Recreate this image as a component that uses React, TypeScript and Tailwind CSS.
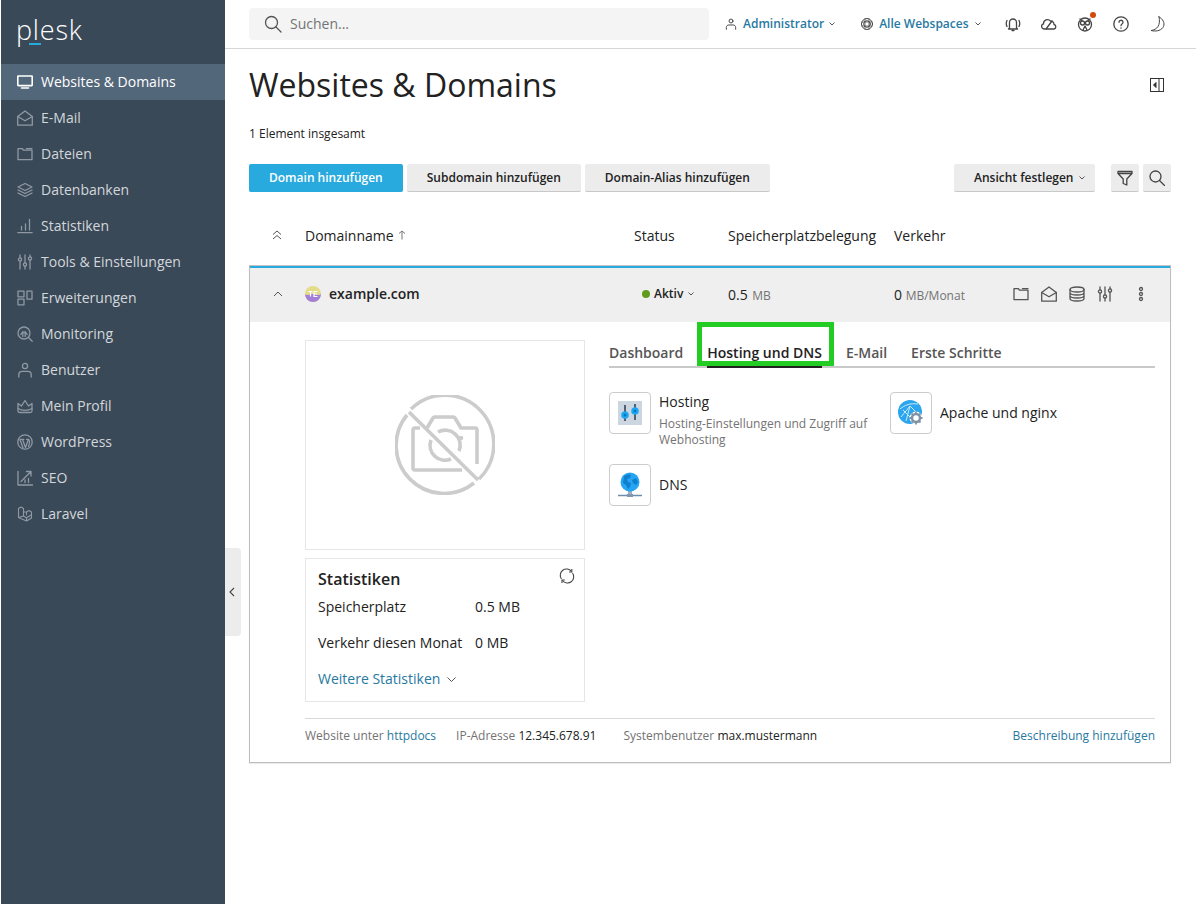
import React from "react";

type IP = { children: React.ReactNode; size?: number; className?: string; sw?: number; vb?: string };
const I = ({ children, size = 16, className = "", sw = 1.3, vb = "0 0 16 16" }: IP) => (
  <svg width={size} height={size} viewBox={vb} fill="none" stroke="currentColor" strokeWidth={sw} strokeLinecap="round" strokeLinejoin="round" className={`shrink-0 ${className}`}>
    {children}
  </svg>
);

const Monitor = () => (
  <I className="text-white" sw={1.6}>
    <rect x="0.8" y="2" width="14.4" height="9.6" rx="0.5" />
    <path d="M4.5 14h7" strokeWidth="1.6" />
  </I>
);
const MailOpen = ({ size = 16 }: { size?: number }) => (
  <I size={size}>
    <path d="M.7 6.5v8.7h14.6V6.5L8 .9z" />
    <path d="M.7 6.5 8 10.8l7.3-4.3" />
  </I>
);
const Folder = ({ size = 16 }: { size?: number }) => (
  <I size={size}>
    <path d="M1 13.7V2.6h4.4l1 1.6h8.6v9.5z" />
    <path d="M9.5 2.6H15" />
  </I>
);
const Layers = () => (
  <I>
    <path d="M8 1.5 15 5 8 8.5 1 5z" />
    <path d="M1 8l7 3.5L15 8" />
    <path d="M1 11l7 3.5 7-3.5" />
  </I>
);
const Bars = () => (
  <I>
    <path d="M.8 14.6h14.4M4.5 12V8.5M8.5 12V6M12.5 12V1.5" />
  </I>
);
const Sliders = ({ size = 16 }: { size?: number }) => (
  <I size={size}>
    <path d="M3 1v3M3 7v8M8 1v8M8 12v3M13 1v2M13 6v9" />
    <circle cx="3" cy="5.5" r="1.6" />
    <circle cx="8" cy="10.5" r="1.6" />
    <circle cx="13" cy="4.5" r="1.6" />
  </I>
);
const Ext = () => (
  <I>
    <rect x="1" y="1.2" width="6" height="5.6" />
    <rect x="1" y="9.2" width="6" height="5.6" />
    <rect x="10" y="1.2" width="5" height="8" />
  </I>
);
const Monitoring = () => (
  <I>
    <circle cx="7" cy="7" r="6" />
    <path d="M11.5 11.5 15.2 15.2" />
    <path d="M3.8 8.5A3.500 3.500 0 0 1 10.200 8.500" />
    <path d="M5.8 5.500v5M8.200 5.500v5" />
  </I>
);
const User = ({ size = 16 }: { size?: number }) => (
  <I size={size}>
    <circle cx="8" cy="4" r="2.6" />
    <path d="M1.8 15v-2.5c0-2 1.6-3.2 3.4-3.2h5.6c1.8 0 3.4 1.200 3.400 3.200V15" />
  </I>
);
const Crown = () => (
  <I>
    <path d="M1 5.500 4.500 8 8 2.500 11.500 8 15 5.500v7.500c0 1-1 1.500-2 1.500H3c-1 0-2-.5-2-1.500z" />
    <path d="M1 10.500c2 1.300 4.500 1.800 7 1.800s5-.5 7-1.800" />
  </I>
);
const WP = () => (
  <I>
    <circle cx="8" cy="8" r="7.200" />
    <path d="M3 5.500 6 14M5.500 5.500l3 8 2.500-7M9.500 5.300h2.500M3 5.300h3.800M11.500 5.500c1.500 1.500 1.500 3.500 0 7" />
  </I>
);
const Seo = () => (
  <I>
    <path d="M1 1.500V15h14.500" />
    <path d="M4 11.500 13.500 2M9.500 1.500h4.500V6M8 12.500V10M11.500 12.500V8.500" />
  </I>
);
const Laravel = () => (
  <I sw={1.1}>
    <path d="M1.500 2.500 4 1l2.500 1.500V10l3 1.700 5-3V6l-2.500-1.500L9.500 6v2.700M1.500 2.500V11.500l8 3.500 5-3V8.700M6.500 6l3 0M9.500 11.700V15M1.500 11.500 6.500 10" />
  </I>
);

const nav: [React.ReactNode, string][] = [
  [<MailOpen />, "E-Mail"],
  [<Folder />, "Dateien"],
  [<Layers />, "Datenbanken"],
  [<Bars />, "Statistiken"],
  [<Sliders />, "Tools & Einstellungen"],
  [<Ext />, "Erweiterungen"],
  [<Monitoring />, "Monitoring"],
  [<User />, "Benutzer"],
  [<Crown />, "Mein Profil"],
  [<WP />, "WordPress"],
  [<Seo />, "SEO"],
  [<Laravel />, "Laravel"],
];

const Chev = ({ className = "" }: { className?: string }) => (
  <svg width="6" height="4" viewBox="0 0 6 4" fill="none" stroke="currentColor" strokeWidth="1" className={`shrink-0 ${className}`}>
    <path d="M.5.5 3 3 5.500.5" />
  </svg>
);

const Btn = ({ children, primary }: { children: React.ReactNode; primary?: boolean }) => (
  <div className={`h-[28px] px-[20px] flex items-center justify-center rounded-[2px] text-[12px] font-semibold border-b ${primary ? "bg-[#28aade] text-white border-[#28aade]" : "bg-[#ececec] text-[#222222] border-[#c8c8c8]"}`}>
    {children}
  </div>
);

const Tile = ({ icon, title, desc, center }: { icon: React.ReactNode; title: string; desc?: string; center?: boolean }) => (
  <div className="flex gap-[8px] w-[281px] shrink-0">
    <div className="w-[42px] h-[42px] border border-[#cccccc] rounded-[4px] flex items-center justify-center shrink-0">{icon}</div>
    <div className={`${center ? "h-[42px] flex items-center" : ""}`}>
      <div className="text-[14px] leading-[20px] text-[#222222]">{title}</div>
      {desc && <div className="text-[12px] leading-[16px] text-[#737373] mt-[4px] w-[215px]">{desc}</div>}
    </div>
  </div>
);

export default function App() {
  return (
    <div className="w-[1196px] h-[904px] flex bg-white overflow-hidden relative pl-[1px] text-[#222222]" style={{ fontFamily: '"Open Sans", sans-serif' }}>
      <aside className="w-[224px] h-full bg-[#3a4958] shrink-0">
        <div className="h-[64px] pl-[15px] pt-[12px] relative">
          <span className="text-[27px] leading-[36px] font-light text-white tracking-[0.8px] block">plesk</span>
          <span className="absolute left-[28px] top-[43px] w-[12px] h-[2px] bg-[#28aade]" />
        </div>
        <div className="h-[36px] bg-[#53677a] flex items-center pl-[16px] gap-[8px] text-white text-[14px]">
          <Monitor />
          <span className="pb-[2px]">Websites &amp; Domains</span>
        </div>
        {nav.map(([ic, t]) => (
          <div key={t} className="h-[36px] flex items-center pl-[16px] gap-[8px] text-[14px] text-[#d3d7db]">
            <span className="text-[#8f99a3] flex">{ic}</span>
            <span className="pb-[2px]">{t}</span>
          </div>
        ))}
      </aside>

      <main className="flex-1 min-w-0 relative">
        <div className="absolute left-0 top-[548px] w-[16px] h-[88px] bg-[#ececec] rounded-r-[4px] flex items-center justify-center text-[#444444]">
          <svg width="6" height="10" viewBox="0 0 6 10" fill="none" stroke="currentColor" strokeWidth="1.100" className="mr-[2px]"><path d="M5 1 1 5l4 4" /></svg>
        </div>

        <header className="h-[49px] border-b border-[#d6d6d6] flex items-center pl-[24px] pr-[25px]">
          <div className="w-[460px] h-[32px] bg-[#f4f4f4] rounded-[4px] flex items-center pl-[15px] gap-[8px] text-[14px] text-[#737373]">
            <I size={18} className="text-[#555555]" vb="0 0 18 18"><circle cx="7.500" cy="7.500" r="6" /><path d="M12 12l5 5" /></I>
            <span className="pb-[2px]">Suchen...</span>
          </div>
          <div className="flex items-center text-[12px] font-semibold text-[#28799f] ml-[16px]">
            <span className="text-[#444444] flex mr-[6px]"><User size={12} /></span>
            <span>Administrator</span>
            <Chev className="ml-[5px] text-[#555555]" />
          </div>
          <div className="flex items-center text-[12px] font-semibold text-[#28799f] ml-[26px]">
            <span className="text-[#444444] flex mr-[6px]">
              <I size={12} vb="0 0 12 12" sw={1}><circle cx="6" cy="6" r="5.500" /><circle cx="6" cy="6" r="3.300" /><path d="M4 1v10M8 1v10M1 4h10M1 8h10" strokeWidth=".7" /></I>
            </span>
            <span>Alle Webspaces</span>
            <Chev className="ml-[6px] text-[#555555]" />
          </div>
          <div className="ml-auto mr-[6px] flex items-center gap-[20px] text-[#444444]">
            <I><path d="M4.500 12V6.500a3.500 3.500 0 0 1 7 0V12l1 1h-9z" /><path d="M7 14.500h2M2 4.500c-1 2-1 4 0 6M14 4.500c1 2 1 4 0 6" /></I>
            <I><path d="M4 13H3a2.600 2.600 0 0 1-.5-5.100A4 4 0 0 1 9.500 5 3.500 3.500 0 0 1 13 8.500 2.300 2.300 0 0 1 13 13H5" /><path d="M5 13 11 5" /></I>
            <span className="relative flex">
              <I><circle cx="8" cy="8.500" r="6.500" /><circle cx="5.500" cy="7" r="2" /><circle cx="10.500" cy="7" r="2" /><path d="M8 10l-2 4M8 10l2 4M3 3l2 1.500M13 3l-2 1.500" /></I>
              <span className="absolute right-[-3px] top-[-4px] w-[6px] h-[6px] rounded-full bg-[#d14a0a]" />
            </span>
            <span className="relative flex">
              <I><circle cx="8" cy="8" r="7.200" /><path d="M6 6.300a2 2 0 1 1 3 1.700c-.7.400-1 .9-1 1.700M8 12v.200" /></I>
            </span>
            <I sw={1}><path d="M10 .8C14 3 16 7 14.500 10.500 13 14 8 16 2 14.500 8 14 12 9 10 .8z" /></I>
          </div>
        </header>

        <div className="pl-[24px] pr-[25px]">
          <div className="flex items-center justify-between h-[72px]">
            <h1 className="text-[32px] leading-[44px] text-[#222222] font-normal">Websites &amp; Domains</h1>
            <svg width="14" height="14" viewBox="0 0 14 14" fill="none" stroke="#333333" strokeWidth="1" className="mr-[7px]">
              <rect x=".5" y=".5" width="13" height="13" /><path d="M9 .5v13" /><path d="M6 4.500 3.500 7 6 9.500z" fill="#333333" />
            </svg>
          </div>
          <div className="text-[12px] leading-[16px] mt-[5px] text-[#222222]">1 Element insgesamt</div>
          <div className="flex items-center mt-[22px]">
            <div className="flex gap-[4px]">
              <Btn primary>Domain hinzufügen</Btn>
              <Btn>Subdomain hinzufügen</Btn>
              <Btn>Domain-Alias hinzufügen</Btn>
            </div>
            <div className="ml-auto flex items-center gap-[4px]">
              <div className="h-[28px] w-[141px] mr-[12px] pl-[20px] flex items-center gap-[6px] bg-[#ececec] border-b border-[#c8c8c8] rounded-[2px] text-[12px] font-semibold">
                Ansicht festlegen <Chev className="text-[#555555]" />
              </div>
              <div className="w-[28px] h-[28px] bg-[#ececec] border-b border-[#c8c8c8] rounded-[2px] flex items-center justify-center text-[#444444]">
                <I><path d="M1 1.500h14v2L9.800 9v6l-3.600-1.500V9L1 3.500zM1 3.500h14" /></I>
              </div>
              <div className="w-[28px] h-[28px] bg-[#ececec] border-b border-[#c8c8c8] rounded-[2px] flex items-center justify-center text-[#444444]">
                <I><circle cx="6.500" cy="6.500" r="5.500" /><path d="M10.500 10.500l5 5" /></I>
              </div>
            </div>
          </div>

          <div className="grid grid-cols-[56px_329px_94px_166px_1fr] items-center h-[73px] pt-[13px] text-[14px]">
            <span className="flex justify-center text-[#555555]">
              <svg width="10" height="10" viewBox="0 0 10 10" fill="none" stroke="currentColor" strokeWidth="1"><path d="M1 4.500 5 1l4 3.500M1 9l4-3.500L9 9" /></svg>
            </span>
            <span className="flex items-center gap-[4px]">Domainname <svg width="8" height="10" viewBox="0 0 8 10" fill="none" stroke="#777777" strokeWidth="1"><path d="M4 9.500V1M1 3.500 4 1l3 2.500" /></svg></span>
            <span>Status</span>
            <span>Speicherplatzbelegung</span>
            <span>Verkehr</span>
          </div>

          <section className="border border-[#bdbdbd] border-t-0 shadow-[0_1px_1px_rgba(0,0,0,0.08)]">
            <div className="border-t border-[#c4c4c4]" />
            <div className="grid grid-cols-[55px_329px_94px_166px_1fr] items-center h-[56px] pb-[2px] bg-[#efefef] border-t-2 border-[#28aade]">
              <span className="flex justify-center text-[#555555]">
                <svg width="10" height="6" viewBox="0 0 10 6" fill="none" stroke="currentColor" strokeWidth="1"><path d="M1 5 5 1l4 4" /></svg>
              </span>
              <span className="flex items-center gap-[8px] text-[14px] font-semibold">
                <svg width="16" height="16" viewBox="0 0 16 16">
                  <circle cx="8" cy="8" r="8" fill="#e5dc8a" />
                  <path d="M0 8a8 8 0 0 0 16 0c-2 2-5 0-8 0S2 10 0 8z" fill="#a37fd9" />
                  <path d="M3.500 5.500h4M5.500 5.500v5M9 5.500h3.500M9 5.500v5h3.500M9 8h3" stroke="#ffffff" strokeWidth="1.200" fill="none" />
                </svg>
                <span className="pb-[2px]">example.com</span>
              </span>
              <span className="flex items-center pl-[8px] gap-[4px] text-[12px] font-semibold">
                <span className="w-[8px] h-[8px] rounded-full bg-[#5f9c1c]" />
                Aktiv
                <Chev className="ml-[1px] text-[#555555]" />
              </span>
              <span className="text-[14px]">0.5 <span className="text-[12px] text-[#737373] ml-[1px]">MB</span></span>
              <span className="flex items-center">
                <span className="text-[14px]">0 <span className="text-[12px] text-[#737373]">MB/Monat</span></span>
                <span className="ml-auto flex items-center gap-[12px] text-[#555555] pr-[21px]">
                  <Folder /><MailOpen />
                  <I><ellipse cx="8" cy="3.500" rx="7" ry="2.500" /><path d="M1 3.500v9c0 1.400 3.100 2.500 7 2.500s7-1.100 7-2.500v-9M1 6.500c0 1.400 3.100 2.500 7 2.500s7-1.100 7-2.500M1 9.500c0 1.400 3.100 2.500 7 2.500s7-1.100 7-2.500" /></I>
                  <Sliders />
                  <I size={16} className="ml-[8px]"><circle cx="8" cy="3" r="1.500" /><circle cx="8" cy="8" r="1.500" /><circle cx="8" cy="13" r="1.500" /></I>
                </span>
              </span>
            </div>

            <div className="pl-[55px] pr-[15px] pt-[18px] pb-[16px]">
              <div className="flex">
                <div className="w-[280px] shrink-0 mr-[24px]">
                  <div className="h-[210px] border border-[#e6e6e6] flex items-center justify-center">
                    <svg width="100" height="100" viewBox="0 0 100 100" fill="none" stroke="#cccccc" strokeWidth="3.600">
                      <path d="M16 14A48 48 0 1 1 84 84" />
                      <path d="M12 20A48 48 0 0 0 79 88" />
                      <path d="M14 17 83 85" />
                      <path d="M25 33h-5a2 2 0 0 0-2 2v38a2 2 0 0 0 2 2h47" strokeLinejoin="round" />
                      <path d="M32 33l6-10a2 2 0 0 1 2-1h18a2 2 0 0 1 2 1l6 10h14a2 2 0 0 1 2 2v34" strokeLinejoin="round" />
                      <path d="M43 37A15 15 0 0 1 64 56M36 45a15 15 0 0 0 20 19" />
                      <circle cx="66" cy="43" r="1.500" fill="#cccccc" strokeWidth="1.500" />
                    </svg>
                  </div>
                  <div className="mt-[8px] h-[144px] border border-[#e6e6e6] px-[12px] pt-[9px] relative">
                    <svg width="16" height="16" viewBox="0 0 16 16" fill="none" stroke="#444444" strokeWidth="1.100" className="absolute right-[9px] top-[9px]">
                      <path d="M2.500 11A6 6 0 0 1 12.500 3.500M13.500 5A6 6 0 0 1 3.500 12.500" />
                      <path d="M12.800 1v3H10M3 15v-3h2.800" />
                    </svg>
                    <div className="text-[16px] leading-[22px] font-semibold">Statistiken</div>
                    <div className="mt-[7px] text-[14px] leading-[20px] grid grid-cols-[157px_1fr] gap-y-[16px] text-[#222222]">
                      <span>Speicherplatz</span><span>0.5 MB</span>
                      <span>Verkehr diesen Monat</span><span>0 MB</span>
                    </div>
                    <div className="mt-[16px] flex items-center gap-[7px] text-[14px] leading-[20px] text-[#28799f]">
                      Weitere Statistiken
                      <svg width="9" height="5" viewBox="0 0 9 5" fill="none" stroke="#555555" strokeWidth="1"><path d="M.5.500 4.500 4.500 8.500.5" /></svg>
                    </div>
                  </div>
                </div>

                <div className="flex-1 min-w-0">
                  <div className="flex gap-[24px] border-b-2 border-[#c9c9c9] h-[28px] text-[14px] font-semibold text-[#555555]">
                    <span className="leading-[26px]">Dashboard</span>
                    <span className="leading-[26px] text-[#222222] h-[28px] border-b-[3px] border-[#222222]">Hosting und DNS</span>
                    <span className="leading-[26px]">E-Mail</span>
                    <span className="leading-[26px]">Erste Schritte</span>
                  </div>
                  <div className="mt-[24px] flex">
                    <Tile
                      title="Hosting"
                      desc="Hosting-Einstellungen und Zugriff auf Webhosting"
                      icon={
                        <svg width="24" height="24" viewBox="0 0 24 24" fill="none">
                          <rect width="24" height="24" fill="#ccd6e0" />
                          <path d="M7 4v16M17 3v16" stroke="#2b3a4a" strokeWidth="1.500" />
                          <circle cx="7" cy="14" r="3.800" fill="#1ea7f5" /><circle cx="7" cy="14" r="1.500" fill="#0a79c4" />
                          <circle cx="17" cy="10" r="3.800" fill="#1ea7f5" /><circle cx="17" cy="10" r="1.500" fill="#0a79c4" />
                        </svg>
                      }
                    />
                    <Tile
                      center
                      title="Apache und nginx"
                      icon={
                        <svg width="26" height="26" viewBox="0 0 26 26" fill="none">
                          <circle cx="12" cy="12" r="12" fill="#2aa5ee" />
                          <path d="M2 9c5-4 10-6 18-5M3 17 12 6l9 9M12 6l-4 15M5 10l10 10" stroke="#c8eafc" strokeWidth="1" />
                          <circle cx="18" cy="18" r="6.500" fill="#ffffff" />
                          <circle cx="18" cy="18" r="4" stroke="#7f93a8" strokeWidth="2.500" />
                          <path d="M18 11.500v2M18 22.500v2M11.500 18h2M22.500 18h2M13.500 13.500l1.400 1.400M21 21l1.500 1.500M22.500 13.500 21 15M15 21l-1.500 1.500" stroke="#7f93a8" strokeWidth="1.800" />
                        </svg>
                      }
                    />
                  </div>
                  <div className="mt-[16px]">
                    <Tile
                      center
                      title="DNS"
                      icon={
                        <svg width="24" height="26" viewBox="0 0 24 26" fill="none">
                          <rect x="10" y="18" width="4" height="5" fill="#9fb0c2" />
                          <path d="M0 23.500h24" stroke="#6f8caa" strokeWidth="1.500" />
                          <rect x="9" y="22" width="6" height="3" fill="#7f98b2" />
                          <circle cx="12" cy="10" r="9.500" fill="#25a5f3" />
                          <path d="M6 4c2-1 5-2 7-1l-1 3-3 1 1 3 3 1-1 4-2 2-2-4-3-2z M14 8l4-2 2 4-2 3-3-2z" fill="#0f7fce" />
                        </svg>
                      }
                    />
                  </div>
                </div>
              </div>

              <div className="mt-[16px] border-t border-[#d9d9d9] h-[28px] pt-[6px] flex items-center text-[12px] text-[#737373]">
                <span>Website unter <span className="text-[#28799f]">httpdocs</span></span>
                <span className="ml-[20px]">IP-Adresse <span className="text-[#222222]">12.345.678.91</span></span>
                <span className="ml-[27px]">Systembenutzer <span className="text-[#222222]">max.mustermann</span></span>
                <span className="ml-auto text-[#28799f]">Beschreibung hinzufügen</span>
              </div>
            </div>
          </section>
        </div>

        <div className="absolute left-[472px] top-[322px] w-[137px] h-[44px] border-[5px] border-[#22cc22] pointer-events-none" />
      </main>
    </div>
  );
}
